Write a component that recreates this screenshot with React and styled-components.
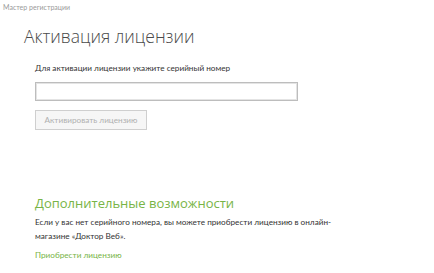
import styled, { createGlobalStyle } from "styled-components";

const GlobalStyle = createGlobalStyle`
  html, body {
    margin: 0;
    padding: 0;
    background: #ffffff;
    font-family: "Open Sans", "Noto Sans", sans-serif;
  }
`;

const small = `"Lato", "Noto Sans", sans-serif`;

export default function App() {
  return (
    <>
      <GlobalStyle />
      <Page>
        <Caption>Мастер регистрации</Caption>
        <Title>Активация лицензии</Title>
        <Content>
          <Label>Для активации лицензии укажите серийный номер</Label>
          <SerialInput type="text" />
          <ActivateButton disabled>Активировать лицензию</ActivateButton>
          <Extra>
            <GreenHeading>Дополнительные возможности</GreenHeading>
            <Text>
              Если у вас нет серийного номера, вы можете приобрести лицензию в онлайн-
              <br />
              магазине «Доктор Веб».
            </Text>
            <Link href="#">Приобрести лицензию</Link>
          </Extra>
        </Content>
      </Page>
    </>
  );
}

const Page = styled.div`
  width: 434px;
  height: 273px;
  box-sizing: border-box;
  padding: 2px 0 0 3px;
  overflow: hidden;
`;

const Caption = styled.div`
  font-family: ${small};
  font-size: 7px;
  line-height: 10px;
  color: #9a9a9a;
`;

const Title = styled.h1`
  margin: 13px 0 0 21px;
  font-size: 17.5px;
  line-height: 22px;
  font-weight: 300;
  color: #4a4a4a;
`;

const Content = styled.div`
  display: flex;
  flex-direction: column;
  align-items: flex-start;
  padding: 15px 0 0 32px;
`;

const Label = styled.div`
  font-family: ${small};
  font-size: 8.2px;
  line-height: 12px;
  color: #333;
`;

const SerialInput = styled.input`
  margin-top: 8px;
  width: 263px;
  height: 19px;
  box-sizing: border-box;
  border: 1px solid #bdbdbd;
  box-shadow: inset 0 0 0 1px #e4e4e4;
  outline: none;
  padding: 0 4px;
`;

const ActivateButton = styled.button`
  margin-top: 9px;
  width: 112px;
  height: 20px;
  box-sizing: border-box;
  border: 1px solid #cfcfcf;
  background: #f6f6f6;
  color: #b0b0b0;
  font-family: ${small};
  font-size: 8.2px;
  padding: 0;
`;

const Extra = styled.div`
  margin-top: 64px;
  display: flex;
  flex-direction: column;
  align-items: flex-start;
`;

const GreenHeading = styled.div`
  font-size: 13px;
  line-height: 18px;
  color: #78b446;
`;

const Text = styled.div`
  margin-top: 3px;
  font-family: ${small};
  font-size: 8.2px;
  line-height: 14px;
  color: #333;
`;

const Link = styled.a`
  margin-top: 6px;
  font-family: ${small};
  font-size: 8.2px;
  line-height: 12px;
  color: #78b446;
  text-decoration: none;
`;
